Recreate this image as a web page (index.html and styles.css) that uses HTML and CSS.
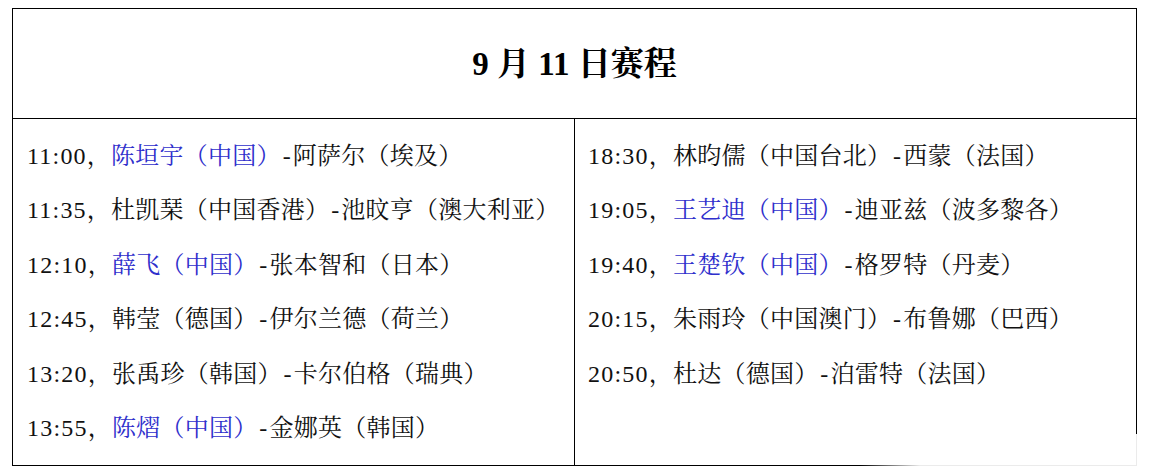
FILE: index.html
```html
<!DOCTYPE html>
<html lang="zh-CN">
<head>
<meta charset="utf-8">
<title>9月11日赛程</title>
<link rel="stylesheet" href="styles.css">
</head>
<body>
<div class="sheet">
  <div class="head"><h1 class="title">9 月 11 日赛程</h1></div>
  <div class="body">
    <div class="col col-left">
      <p class="row"><span class="t">11:00</span>，<span class="cn">陈垣宇（中国）</span><span class="d">-</span>阿萨尔（埃及）</p>
      <p class="row"><span class="t">11:35</span>，杜凯琹（中国香港）<span class="d">-</span>池旼亨（澳大利亚）</p>
      <p class="row"><span class="t">12:10</span>，<span class="cn">薛飞（中国）</span><span class="d">-</span>张本智和（日本）</p>
      <p class="row"><span class="t">12:45</span>，韩莹（德国）<span class="d">-</span>伊尔兰德（荷兰）</p>
      <p class="row"><span class="t">13:20</span>，张禹珍（韩国）<span class="d">-</span>卡尔伯格（瑞典）</p>
      <p class="row"><span class="t">13:55</span>，<span class="cn">陈熠（中国）</span><span class="d">-</span>金娜英（韩国）</p>
    </div>
    <div class="col col-right">
      <p class="row"><span class="t">18:30</span>，林昀儒（中国台北）<span class="d">-</span>西蒙（法国）</p>
      <p class="row"><span class="t">19:05</span>，<span class="cn">王艺迪（中国）</span><span class="d">-</span>迪亚兹（波多黎各）</p>
      <p class="row"><span class="t">19:40</span>，<span class="cn">王楚钦（中国）</span><span class="d">-</span>格罗特（丹麦）</p>
      <p class="row"><span class="t">20:15</span>，朱雨玲（中国澳门）<span class="d">-</span>布鲁娜（巴西）</p>
      <p class="row"><span class="t">20:50</span>，杜达（德国）<span class="d">-</span>泊雷特（法国）</p>
    </div>
  </div>
  <div class="fade"></div>
</div>
</body>
</html>
```

FILE: styles.css
```css
html, body {
  margin: 0;
  padding: 0;
  background: #ffffff;
}

body {
  font-family: "Liberation Serif", "Noto Serif CJK SC", "Noto Sans CJK SC", serif;
  color: #111111;
}

.sheet {
  position: relative;
  box-sizing: border-box;
  width: 1125px;
  height: 458px;
  margin: 8px 0 0 12px;
  border: 1px solid #000000;
  display: flex;
  flex-direction: column;
}

.head {
  height: 109px;
  border-bottom: 1px solid #000000;
  display: flex;
  align-items: center;
  justify-content: center;
}

.title {
  margin: 0;
  font-size: 33px;
  font-weight: bold;
  line-height: 1;
  color: #000000;
  padding-top: 1px;
}

.body {
  flex: 1;
  display: flex;
}

.col {
  box-sizing: border-box;
  padding-top: 10px;
}

.col-left {
  width: 562px;
  border-right: 1px solid #000000;
  padding-left: 14px;
}

.col-right {
  width: 561px;
  padding-left: 13px;
}

.row {
  margin: 0;
  font-size: 24px;
  line-height: 54.4px;
  white-space: nowrap;
  text-spacing-trim: space-all;
  letter-spacing: 0.25px;
}

.t {
  letter-spacing: 1.2px;
}

.d {
  display: inline-block;
  width: 12px;
  text-align: center;
}

.cn {
  color: #2f2fcc;
}

.fade {
  position: absolute;
  right: -2px;
  bottom: -2px;
  width: 278px;
  height: 33px;
  background: linear-gradient(to right, rgba(255, 255, 255, 0), rgba(255, 255, 255, 0.92) 60px);
  pointer-events: none;
}
```
